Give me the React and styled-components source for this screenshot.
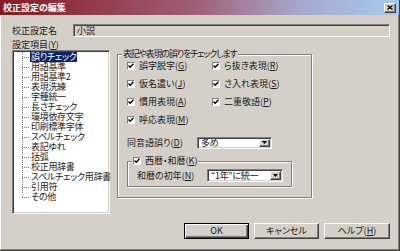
import React from "react";
import styled, { createGlobalStyle, css } from "styled-components";

const FONT = `"Noto Sans CJK JP", "Noto Sans", sans-serif`;

const Global = createGlobalStyle`
  html, body { margin: 0; padding: 0; background: #d4d0c8; }
  body { font-family: ${FONT}; }
`;

const raised = css`
  border-top: 1px solid #fff;
  border-left: 1px solid #fff;
  border-right: 1px solid #404040;
  border-bottom: 1px solid #404040;
  box-shadow: inset -1px -1px 0 #808080;
`;

const sunken = css`
  border-top: 1px solid #808080;
  border-left: 1px solid #808080;
  border-right: 1px solid #fff;
  border-bottom: 1px solid #fff;
  box-shadow: inset 1px 1px 0 #404040, inset -1px -1px 0 #d4d0c8;
`;

const Window = styled.div`
  width: 400px;
  height: 251px;
  box-sizing: border-box;
  display: flex;
  flex-direction: column;
  background: #d4d0c8;
  border-right: 1px solid #404040;
  border-bottom: 1px solid #404040;
  font-family: ${FONT};
  font-size: 9px;
  color: #1a1a1a;
  font-feature-settings: "palt" 1;
  overflow: hidden;
`;

const TitleBar = styled.div`
  height: 15px;
  flex: none;
  display: flex;
  align-items: center;
  justify-content: space-between;
  padding: 0 3px 0 3px;
  background: linear-gradient(to right, #861a20 0%, #a2607a 50%, #a6a8cc 75%, #a6caf0 100%);
`;

const Title = styled.span`
  color: #fff;
  font-weight: bold;
  font-size: 9px;
  line-height: 15px;
  white-space: nowrap;
`;

const CloseButton = styled.div`
  width: 12px;
  height: 10px;
  box-sizing: border-box;
  background: #d4d0c8;
  ${raised};
  display: flex;
  align-items: center;
  justify-content: center;
`;

const Body = styled.div`
  flex: 1;
  min-height: 0;
  display: flex;
  flex-direction: column;
  padding: 9px 8px 10px 11px;
  border-left: 1px solid #fff;
  border-right: 1px solid #808080;
  border-bottom: 1px solid #808080;
`;

const NameRow = styled.div`
  display: flex;
  align-items: center;
  height: 13px;
`;

const NameLabel = styled.span`
  width: 61px;
  flex: none;
  white-space: nowrap;
  line-height: 11px;
`;

const NameInput = styled.div`
  flex: 1;
  height: 13px;
  box-sizing: border-box;
  ${sunken};
  background: #d4d0c8;
  padding-left: 3px;
  line-height: 11px;
`;

const SectionLabel = styled.div`
  margin-top: 3px;
  height: 10px;
  line-height: 10px;
`;

const Main = styled.div`
  flex: 1;
  min-height: 0;
  display: flex;
  gap: 7px;
`;

const Tree = styled.div`
  width: 98px;
  height: 164px;
  flex: none;
  box-sizing: border-box;
  ${sunken};
  background: #fff;
  padding: 1px 0 0 9px;
`;

const TreeItem = styled.div`
  display: flex;
  align-items: center;
  height: 10px;
`;

const Connector = styled.span`
  width: 8px;
  height: 10px;
  flex: none;
  background:
    repeating-linear-gradient(to bottom, #808080 0 1px, transparent 1px 2px) 0 0 / 1px ${(p) => (p.$last ? "6px" : "100%")} no-repeat,
    repeating-linear-gradient(to right, #808080 0 1px, transparent 1px 2px) 0 5px / 100% 1px no-repeat;
`;

const ItemText = styled.span`
  display: inline-block;
  height: 10px;
  padding: 0 1px;
  line-height: 10px;
  white-space: nowrap;
  letter-spacing: -0.3px;
  ${(p) =>
    p.$selected &&
    css`
      background: #0a246a;
      color: #fff;
    `}
`;

const RightColumn = styled.div`
  flex: 1;
  display: flex;
  flex-direction: column;
`;

const GroupBox = styled.fieldset`
  margin: ${(p) => p.$margin || "0"};
  width: ${(p) => p.$width}px;
  box-sizing: border-box;
  min-width: 0;
  padding: ${(p) => p.$padding};
  border: 1px solid #808080;
  box-shadow: inset 1px 1px 0 #fff, 1px 1px 0 #fff;
`;

const Legend = styled.legend`
  margin-left: -5px;
  padding: 0 1px;
  height: 10px;
  line-height: 10px;
  background: #d4d0c8;
  display: flex;
  align-items: center;
  gap: 4px;
  letter-spacing: ${(p) => p.$tight || 0}px;
  white-space: nowrap;
`;

const CheckGrid = styled.div`
  display: grid;
  grid-template-columns: 85px auto;
  grid-auto-rows: 12px;
  row-gap: 6px;
  margin-top: 1px;
`;

const CheckRow = styled.label`
  display: flex;
  align-items: center;
  gap: 4px;
  white-space: nowrap;
  line-height: 12px;
`;

const Box = styled.span`
  width: 8px;
  height: 8px;
  flex: none;
  box-sizing: border-box;
  border-top: 1px solid #808080;
  border-left: 1px solid #808080;
  border-right: 1px solid #fff;
  border-bottom: 1px solid #fff;
  background: #fff;
  display: flex;
  align-items: center;
  justify-content: center;
`;

const FieldRow = styled.div`
  display: flex;
  align-items: center;
  height: 13px;
  margin-top: ${(p) => p.$mt || 0}px;
`;

const FieldLabel = styled.span`
  width: 70px;
  flex: none;
  white-space: nowrap;
  line-height: 11px;
`;

const SelectBox = styled.div`
  width: ${(p) => p.$width}px;
  height: ${(p) => p.$height}px;
  box-sizing: border-box;
  ${sunken};
  background: #fff;
  display: flex;
  align-items: stretch;
  padding: 1px;
`;

const SelectValue = styled.span`
  flex: 1;
  padding-left: 2px;
  line-height: 9px;
  display: flex;
  align-items: center;
  white-space: nowrap;
  letter-spacing: -0.3px;
`;

const DropButton = styled.span`
  width: 11px;
  flex: none;
  box-sizing: border-box;
  background: #d4d0c8;
  ${raised};
  display: flex;
  align-items: center;
  justify-content: center;
`;

const ButtonRow = styled.div`
  margin-top: auto;
  display: flex;
  justify-content: flex-end;
  gap: 5px;
`;

const Button = styled.div`
  width: ${(p) => p.$width}px;
  height: 16px;
  box-sizing: border-box;
  background: #d4d0c8;
  display: flex;
  align-items: center;
  justify-content: center;
  white-space: nowrap;
  line-height: 12px;
  ${(p) =>
    p.$default
      ? css`
          border: 1px solid #000;
          box-shadow: inset 1px 1px 0 #fff, inset -1px -1px 0 #404040, inset -2px -2px 0 #808080;
        `
      : raised}
`;

const Check = () => (
  <Box>
    <svg width="6" height="6" viewBox="0 0 6 6">
      <path d="M0.5 2.5 L2.2 4.3 L5.5 0.8" fill="none" stroke="#000" strokeWidth="1.3" />
    </svg>
  </Box>
);

const Arrow = () => (
  <svg width="5" height="3" viewBox="0 0 5 3">
    <path d="M0 0 H5 L2.5 3 Z" fill="#000" />
  </svg>
);

const Select = ({ width, height, value }) => (
  <SelectBox $width={width} $height={height}>
    <SelectValue>{value}</SelectValue>
    <DropButton>
      <Arrow />
    </DropButton>
  </SelectBox>
);

const treeItems = [
  "誤りチェック",
  "用語基準",
  "用語基準2",
  "表現洗練",
  "字種統一",
  "長さチェック",
  "環境依存文字",
  "印刷標準字体",
  "スペルチェック",
  "表記ゆれ",
  "括弧",
  "校正用辞書",
  "スペルチェック用辞書",
  "引用符",
  "その他",
];

const checks = [
  ["誤字脱字", "G"],
  ["ら抜き表現", "R"],
  ["仮名遣い", "J"],
  ["さ入れ表現", "S"],
  ["慣用表現", "A"],
  ["二重敬語", "P"],
  ["呼応表現", "M"],
];

const Key = ({ k }) => (
  <>
    (<u>{k}</u>)
  </>
);

export default function App() {
  return (
    <>
      <Global />
      <Window>
        <TitleBar>
          <Title>校正設定の編集</Title>
          <CloseButton>
            <svg width="6" height="5" viewBox="0 0 6 5">
              <path d="M0.5 0.5 L5.5 4.5 M5.5 0.5 L0.5 4.5" stroke="#000" strokeWidth="1.2" />
            </svg>
          </CloseButton>
        </TitleBar>
        <Body>
          <NameRow>
            <NameLabel>校正設定名</NameLabel>
            <NameInput>小説</NameInput>
          </NameRow>
          <SectionLabel>
            設定項目<Key k="Y" />
          </SectionLabel>
          <Main>
            <Tree>
              {treeItems.map((t, i) => (
                <TreeItem key={t}>
                  <Connector $last={i === treeItems.length - 1} />
                  <ItemText $selected={i === 0}>{t}</ItemText>
                </TreeItem>
              ))}
            </Tree>
            <RightColumn>
              <GroupBox $width={195} $padding="0 0 10px 9px" $margin="-1px 0 0 0">
                <Legend $tight={-1.2}>表記や表現の誤りをチェックします</Legend>
                <CheckGrid>
                  {checks.map(([label, k]) => (
                    <CheckRow key={label}>
                      <Check />
                      <span>
                        {label}
                        <Key k={k} />
                      </span>
                    </CheckRow>
                  ))}
                </CheckGrid>
                <FieldRow $mt={10}>
                  <FieldLabel>
                    同音語誤り<Key k="D" />
                  </FieldLabel>
                  <Select width={75} height={12} value="多め" />
                </FieldRow>
                <GroupBox $width={165} $padding="3px 0 4px 9px" $margin="7px 0 0 0">
                  <Legend>
                    <Check />
                    <span>
                      西暦・和暦<Key k="K" />
                    </span>
                  </Legend>
                  <FieldRow>
                    <FieldLabel>
                      和暦の初年<Key k="N" />
                    </FieldLabel>
                    <Select width={76} height={13} value="“1年”に統一" />
                  </FieldRow>
                </GroupBox>
              </GroupBox>
              <ButtonRow>
                <Button $width={65} $default>OK</Button>
                <Button $width={65}>キャンセル</Button>
                <Button $width={66}>
                  ヘルプ<Key k="H" />
                </Button>
              </ButtonRow>
            </RightColumn>
          </Main>
        </Body>
      </Window>
    </>
  );
}
